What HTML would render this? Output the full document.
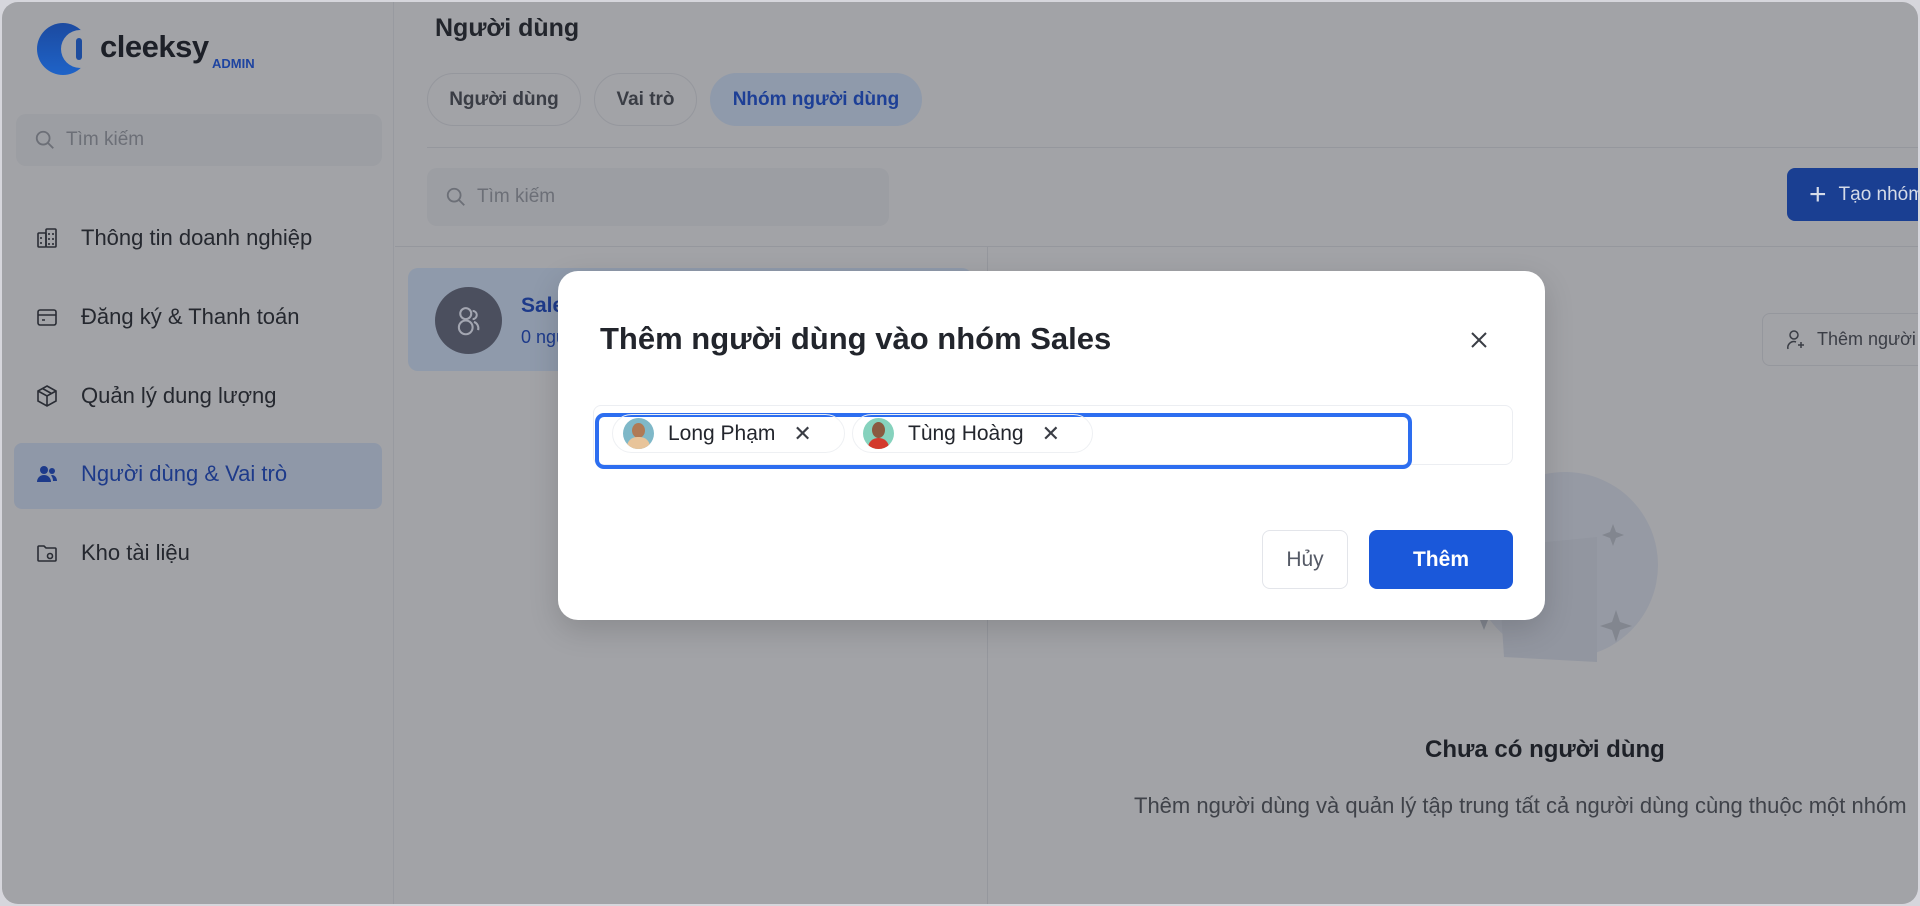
<!DOCTYPE html>
<html><head><meta charset="utf-8"><style>
*{box-sizing:border-box;margin:0;padding:0}
body{width:1920px;height:906px;background:#d6d6dc;font-family:"Liberation Sans","DejaVu Sans",sans-serif;overflow:hidden;position:relative}
.frame{position:absolute;left:2px;top:2px;width:1916px;height:902px;border-radius:16px;background:#a2a3a7;overflow:hidden}
.abs{position:absolute}
.side{left:0;top:0;width:392px;height:902px;border-right:1px solid #989aa0}
.nav{position:absolute;left:33px;font-size:22px;color:#25282f;display:flex;align-items:center;gap:22px;white-space:nowrap}
.nav svg{width:24px;height:24px;flex-shrink:0}
svg{flex-shrink:0}
.search{background:#9c9ea3;border-radius:10px;color:#6c6f77;font-size:19px;display:flex;align-items:center;gap:10px;padding-left:18px}
.tab{position:absolute;top:71px;height:53px;border:1.5px solid #95979d;border-radius:27px;font-size:19px;font-weight:bold;color:#3a3d45;display:flex;align-items:center;justify-content:center}
.modal{position:absolute;left:558px;top:271px;width:987px;height:349px;background:#fff;border-radius:20px;box-shadow:0 10px 30px rgba(0,0,0,.15)}
.chip{position:absolute;top:143px;height:39px;border:1px solid #eef0f3;border-radius:20px;display:flex;align-items:center;font-size:21px;color:#23262d}
.av{width:31px;height:31px;border-radius:50%;margin-left:10px;margin-right:14px;position:relative;overflow:hidden}
</style></head><body><div class="frame">
<div class="abs side">
  <svg class="abs" style="left:34px;top:20px" width="58" height="54" viewBox="0 0 58 54"><defs><linearGradient id="g" x1="0" y1="0" x2="0" y2="1"><stop offset="0" stop-color="#1c4aa0"/><stop offset="1" stop-color="#1e63c8"/></linearGradient></defs><circle cx="27" cy="27" r="26" fill="url(#g)"/><circle cx="44" cy="27" r="19" fill="#a2a3a7"/><rect x="40" y="16" width="6" height="22" rx="3" fill="#1d4c9e"/></svg>
  <div class="abs" style="left:98px;top:27px;font-size:31px;font-weight:bold;color:#1d2028;letter-spacing:-0.5px">cleeksy</div>
  <div class="abs" style="left:210px;top:54px;font-size:13px;font-weight:bold;color:#1d43a0">ADMIN</div>
  <div class="abs search" style="left:14px;top:112px;width:366px;height:52px"><svg width="22" height="22" viewBox="0 0 24 24" fill="none" stroke="#6c6f77" stroke-width="2"><circle cx="10" cy="10" r="7"/><path d="M15 15l6 6"/></svg>Tìm kiếm</div>
  <div class="abs" style="left:12px;top:441px;width:368px;height:66px;background:#8f98a8;border-radius:8px"></div>
  <div class="nav" style="top:223px"><svg viewBox="0 0 24 24" fill="none" stroke="#2a2d35" stroke-width="1.6"><rect x="3" y="7" width="8" height="14" rx="1"/><rect x="11" y="3" width="10" height="18" rx="1"/><path d="M6 11v2M6 16v2M14 7v2M18 7v2M14 12v2M18 12v2M14 17v2M18 17v2"/></svg>Thông tin doanh nghiệp</div>
  <div class="nav" style="top:302px"><svg viewBox="0 0 24 24" fill="none" stroke="#2a2d35" stroke-width="1.6"><rect x="3" y="5" width="18" height="15" rx="2"/><path d="M3 10h18M7 15h3"/></svg>Đăng ký &amp; Thanh toán</div>
  <div class="nav" style="top:381px"><svg viewBox="0 0 24 24" fill="none" stroke="#2a2d35" stroke-width="1.6"><path d="M12 2l9 5v10l-9 5-9-5V7z M3 7l9 5 9-5M12 12v10M7.5 4.5l9 5"/></svg>Quản lý dung lượng</div>
  <div class="nav" style="top:459px;color:#1d3a8a"><svg viewBox="0 0 24 24" fill="#1d3a8a"><circle cx="9" cy="8" r="4"/><path d="M2 20c0-4 3-7 7-7s7 3 7 7z"/><circle cx="17" cy="9" r="3"/><path d="M17 13c3 0 5 3 5 6h-4c0-2-.5-4-2-5.5z"/></svg>Người dùng &amp; Vai trò</div>
  <div class="nav" style="top:538px"><svg viewBox="0 0 24 24" fill="none" stroke="#2a2d35" stroke-width="1.6"><path d="M3 6a1 1 0 0 1 1-1h5l2 2h9a1 1 0 0 1 1 1v11a1 1 0 0 1-1 1H4a1 1 0 0 1-1-1z"/><circle cx="15" cy="15" r="2.5"/></svg>Kho tài liệu</div>
</div>
<div class="abs" style="left:433px;top:12px;font-size:25px;font-weight:bold;color:#22252c">Người dùng</div>
<div class="tab" style="left:425px;width:154px">Người dùng</div>
<div class="tab" style="left:592px;width:103px">Vai trò</div>
<div class="tab" style="left:708px;width:212px;background:#8f9aab;border-color:#8f9aab;color:#1d3f96">Nhóm người dùng</div>
<div class="abs" style="left:425px;top:145px;width:1500px;height:1px;background:#95979d"></div>
<div class="abs search" style="left:425px;top:166px;width:462px;height:58px"><svg width="22" height="22" viewBox="0 0 24 24" fill="none" stroke="#6c6f77" stroke-width="2"><circle cx="10" cy="10" r="7"/><path d="M15 15l6 6"/></svg>Tìm kiếm</div>
<div class="abs" style="left:1785px;top:166px;width:150px;height:53px;background:#1a3f92;border-radius:8px;color:#d5dbe8;font-size:19px;display:flex;align-items:center;padding-left:22px;gap:12px;white-space:nowrap"><span style="font-size:30px;font-weight:300">+</span>Tạo nhóm</div>
<div class="abs" style="left:393px;top:244px;width:1530px;height:1px;background:#95979d"></div>
<div class="abs" style="left:985px;top:245px;width:1px;height:660px;background:#95979d"></div>
<div class="abs" style="left:406px;top:266px;width:564px;height:103px;background:#8f9aab;border-radius:10px"></div>
<div class="abs" style="left:433px;top:285px;width:67px;height:67px;border-radius:50%;background:#4b4f5e"><svg style="margin:17px" width="33" height="33" viewBox="0 0 24 24" fill="none" stroke="#a3a6b1" stroke-width="1.5"><circle cx="10" cy="7" r="4"/><circle cx="10" cy="17" r="5"/><path d="M15 11a3 3 0 0 0 0-6M16 13a5 5 0 0 1 3 6"/></svg></div>
<div class="abs" style="left:519px;top:292px;font-size:21px;color:#1d3a8a;font-weight:bold">Sales</div>
<div class="abs" style="left:519px;top:325px;font-size:18px;color:#1d3a8a">0 người dùng</div>
<div class="abs" style="left:1760px;top:311px;width:180px;height:53px;border:1.5px solid #95979d;border-radius:8px;color:#3a3d45;font-size:18px;display:flex;align-items:center;padding-left:22px;gap:12px;white-space:nowrap"><svg width="20" height="22" viewBox="0 0 20 22" fill="none" stroke="#3a3d45" stroke-width="1.5"><circle cx="9" cy="6" r="4"/><path d="M3 20a6 6 0 0 1 8-7M13 16h6M16 13v6"/></svg>Thêm người dùng</div>
<div class="abs" style="left:1470px;top:470px;width:186px;height:186px;border-radius:50%;background:#969aa4"></div>
<svg class="abs" style="left:1440px;top:470px" width="220" height="220" viewBox="0 0 220 220"><path d="M55 75 L155 65 L155 190 L62 185Z" fill="#9296a0"/><path d="M38 140 l4 -10 l4 10 l10 4 l-10 4 l-4 10 l-4 -10 l-10 -4z M168 60 l3 -8 l3 8 l8 3 l-8 3 l-3 8 l-3 -8 l-8 -3z M170 150 l4 -12 l4 12 l12 4 l-12 4 l-4 12 l-4 -12 l-12 -4z" fill="#82868f"/></svg>
<div class="abs" style="left:1423px;top:734px;font-size:24px;font-weight:bold;color:#1e2128">Chưa có người dùng</div>
<div class="abs" style="left:1132px;top:791px;font-size:22px;color:#3f4249;white-space:nowrap">Thêm người dùng và quản lý tập trung tất cả người dùng cùng thuộc một nhóm</div>
</div>
<div class="modal">
  <div class="abs" style="left:42px;top:50px;font-size:31px;font-weight:bold;color:#22252c">Thêm người dùng vào nhóm Sales</div>
  <svg class="abs" style="left:911px;top:59px" width="20" height="20" viewBox="0 0 20 20" stroke="#3a3d45" stroke-width="2"><path d="M3 3l14 14M17 3L3 17"/></svg>
  <div class="abs" style="left:35px;top:134px;width:920px;height:60px;border:1px solid #eceef2;border-radius:8px"></div>
  <div class="abs" style="left:37px;top:142px;width:817px;height:56px;border:4px solid #2d6ef0;border-radius:9px"></div>
  <div class="chip" style="left:54px;width:233px"><div class="av" style="background:#7fb8c8"><div class="abs" style="left:9px;top:5px;width:13px;height:15px;border-radius:50%;background:#b07a55"></div><div class="abs" style="left:4px;top:19px;width:23px;height:14px;border-radius:10px 10px 0 0;background:#e8c49a"></div></div>Long Phạm<span style="margin-left:18px;font-size:22px;color:#3a3d45">✕</span></div>
  <div class="chip" style="left:294px;width:241px"><div class="av" style="background:#86d2bd"><div class="abs" style="left:9px;top:4px;width:13px;height:16px;border-radius:50%;background:#8a5a40"></div><div class="abs" style="left:5px;top:20px;width:21px;height:13px;border-radius:10px 10px 0 0;background:#d33a2c"></div></div>Tùng Hoàng<span style="margin-left:18px;font-size:22px;color:#3a3d45">✕</span></div>
  <div class="abs" style="left:704px;top:259px;width:86px;height:59px;border:1.5px solid #e3e5ea;border-radius:8px;font-size:21px;color:#555a66;display:flex;align-items:center;justify-content:center">Hủy</div>
  <div class="abs" style="left:811px;top:259px;width:144px;height:59px;background:#1a58da;border-radius:8px;font-size:21px;font-weight:bold;color:#fff;display:flex;align-items:center;justify-content:center">Thêm</div>
</div>
</body></html>
